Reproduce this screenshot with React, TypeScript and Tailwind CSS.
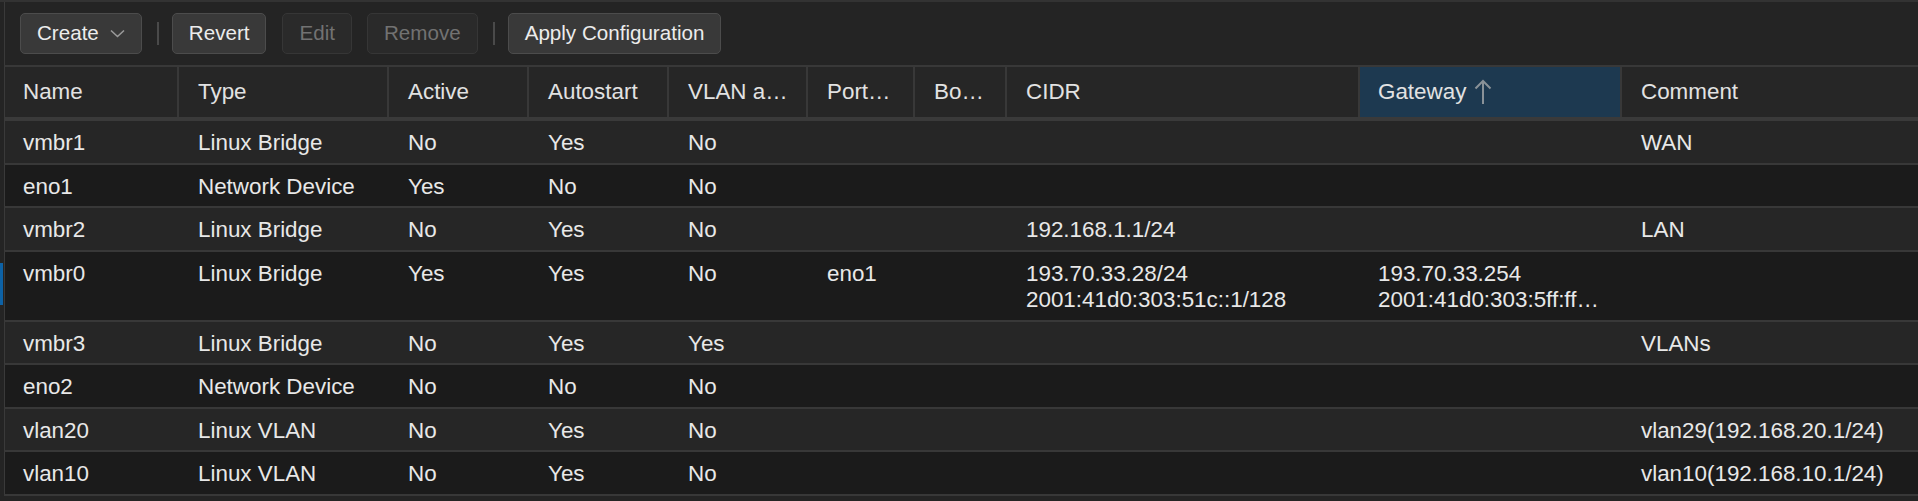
import React from "react";

type Row = {
  name: string;
  type: string;
  active: string;
  autostart: string;
  vlan: string;
  ports?: string;
  bond?: string;
  cidr?: string[];
  gateway?: string[];
  comment?: string;
  selected?: boolean;
};

const rows: Row[] = [
  { name: "vmbr1", type: "Linux Bridge", active: "No", autostart: "Yes", vlan: "No", comment: "WAN" },
  { name: "eno1", type: "Network Device", active: "Yes", autostart: "No", vlan: "No" },
  { name: "vmbr2", type: "Linux Bridge", active: "No", autostart: "Yes", vlan: "No", cidr: ["192.168.1.1/24"], comment: "LAN" },
  {
    name: "vmbr0",
    type: "Linux Bridge",
    active: "Yes",
    autostart: "Yes",
    vlan: "No",
    ports: "eno1",
    cidr: ["193.70.33.28/24", "2001:41d0:303:51c::1/128"],
    gateway: ["193.70.33.254", "2001:41d0:303:5ff:ff…"],
    selected: true,
  },
  { name: "vmbr3", type: "Linux Bridge", active: "No", autostart: "Yes", vlan: "Yes", comment: "VLANs" },
  { name: "eno2", type: "Network Device", active: "No", autostart: "No", vlan: "No" },
  { name: "vlan20", type: "Linux VLAN", active: "No", autostart: "Yes", vlan: "No", comment: "vlan29(192.168.20.1/24)" },
  { name: "vlan10", type: "Linux VLAN", active: "No", autostart: "Yes", vlan: "No", comment: "vlan10(192.168.10.1/24)" },
];

function Button({
  children,
  disabled = false,
  className = "",
}: {
  children: React.ReactNode;
  disabled?: boolean;
  className?: string;
}) {
  return (
    <div
      className={
        (disabled
          ? "h-[41px] px-4 flex items-center rounded-[5px] border border-[#363636] bg-[#2a2a2a] text-[#727272] "
          : "h-[41px] px-4 flex items-center rounded-[5px] border border-[#4c4c4c] bg-[#393939] text-[#ececec] ") +
        className
      }
    >
      {children}
    </div>
  );
}

function Sep({ className = "" }: { className?: string }) {
  return <div className={"w-[2px] h-[23px] bg-[#4a4a4a] " + className} />;
}

export default function App() {
  return (
    <div
      className="w-[1918px] h-[501px] overflow-hidden bg-[#242424] text-[#e8e8e8]"
      style={{ fontFamily: '"Liberation Sans", Arial, sans-serif' }}
    >
      {/* Toolbar */}
      <div className="flex h-[65px] border-t-2 border-[#333333]">
        <div className="w-[4px]" />
        <div className="flex-1 flex items-center pl-[15px] border-l border-[#3a3a3a] text-[20.6px]">
          <Button>
            <span>Create</span>
            <svg className="ml-[11px]" width="15" height="9" viewBox="0 0 15 9" fill="none">
              <path d="M1 1.5 L7.5 7.5 L14 1.5" stroke="#9a9a9a" strokeWidth="1.6" />
            </svg>
          </Button>
          <Sep className="ml-[15px]" />
          <Button className="ml-[13px]">Revert</Button>
          <Button disabled className="ml-[16px]">Edit</Button>
          <Button disabled className="ml-[15px]">Remove</Button>
          <Sep className="ml-[15px]" />
          <Button className="ml-[13px]">Apply Configuration</Button>
        </div>
      </div>

      {/* Header */}
      <div className="flex h-[56px]">
        <div className="w-[4px]" />
        <div className="flex-1 flex border-l border-[#3a3a3a] border-t-2 border-t-[#383838] border-b-4 border-b-[#3a3a3a] bg-[#262626] text-[22.4px] text-[#e2e2e2]">
          <div className="w-[174px] pl-[18px] flex items-center border-r-2 border-[#383838]">Name</div>
          <div className="w-[210px] pl-[19px] flex items-center border-r-2 border-[#383838]">Type</div>
          <div className="w-[140px] pl-[19px] flex items-center border-r-2 border-[#383838]">Active</div>
          <div className="w-[140px] pl-[19px] flex items-center border-r-2 border-[#383838]">Autostart</div>
          <div className="w-[139px] pl-[19px] flex items-center border-r-2 border-[#383838]">VLAN a…</div>
          <div className="w-[107px] pl-[19px] flex items-center border-r-2 border-[#383838]">Port…</div>
          <div className="w-[92px] pl-[19px] flex items-center border-r-2 border-[#383838]">Bo…</div>
          <div className="w-[353px] pl-[19px] flex items-center border-r-2 border-[#383838]">CIDR</div>
          <div className="w-[262px] pl-[18px] flex items-center border-r-2 border-[#383838] bg-[#1d3950]">
            <span>Gateway</span>
            <svg className="ml-[8px]" width="18" height="26" viewBox="0 0 18 26" fill="none">
              <path d="M9 2 V25 M1.5 9.5 L9 2 L16.5 9.5" stroke="#8a9298" strokeWidth="2" />
            </svg>
          </div>
          <div className="flex-1 pl-[19px] flex items-center">Comment</div>
        </div>
      </div>

      {/* Rows */}
      {rows.map((r, i) => (
        <div key={r.name} className={r.selected ? "flex h-[70px]" : "flex h-[43.5px]"}>
          <div className="w-[4px]">
            {r.selected && <div className="w-[3px] h-[42px] mt-[11px] bg-[#0d62a6]" />}
          </div>
          <div
            className={
              i % 2 === 0
                ? "flex-1 flex border-l border-[#3a3a3a] border-b-2 border-b-[#383838] bg-[#262626] text-[22.4px] leading-[26px] pt-[9px]"
                : "flex-1 flex border-l border-[#3a3a3a] border-b-2 border-b-[#383838] bg-[#1b1b1b] text-[22.4px] leading-[26px] pt-[9px]"
            }
          >
            <div className="w-[174px] pl-[18px]">{r.name}</div>
            <div className="w-[210px] pl-[19px]">{r.type}</div>
            <div className="w-[140px] pl-[19px]">{r.active}</div>
            <div className="w-[140px] pl-[19px]">{r.autostart}</div>
            <div className="w-[139px] pl-[19px]">{r.vlan}</div>
            <div className="w-[107px] pl-[19px]">{r.ports}</div>
            <div className="w-[92px] pl-[19px]">{r.bond}</div>
            <div className="w-[353px] pl-[19px] whitespace-nowrap">
              {r.cidr?.map((c) => (
                <div key={c}>{c}</div>
              ))}
            </div>
            <div className="w-[262px] pl-[18px] whitespace-nowrap overflow-hidden">
              {r.gateway?.map((g) => (
                <div key={g}>{g}</div>
              ))}
            </div>
            <div className="flex-1 pl-[19px] whitespace-nowrap">{r.comment}</div>
          </div>
        </div>
      ))}
    </div>
  );
}
